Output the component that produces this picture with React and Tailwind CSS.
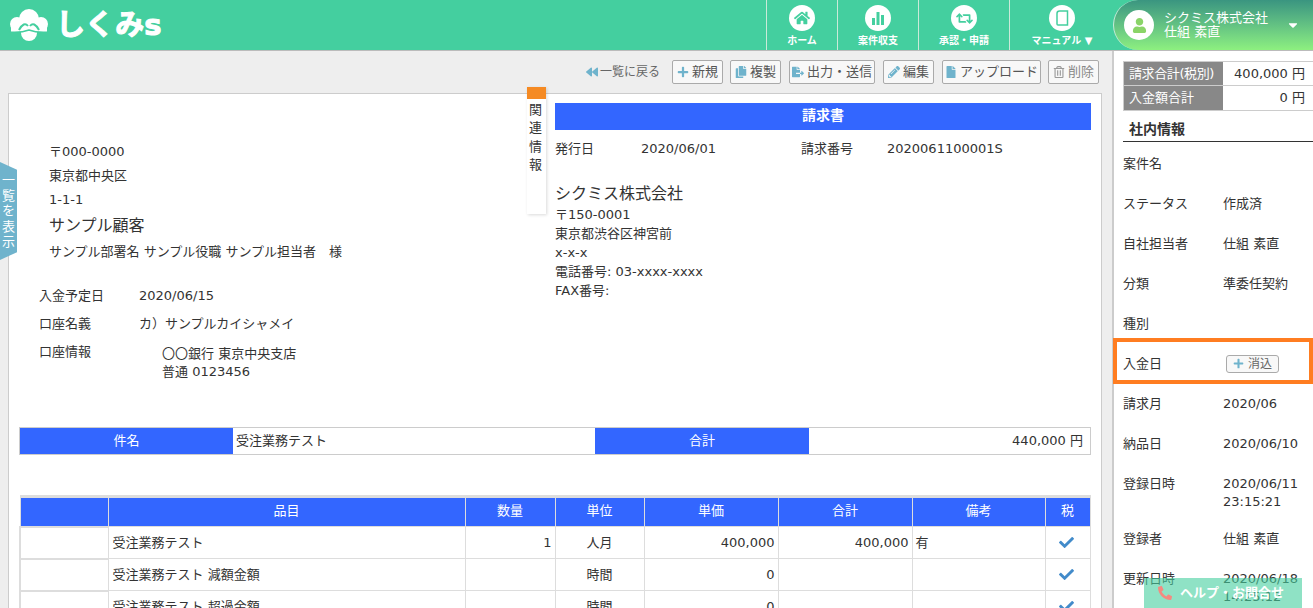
import React from 'react';
import { FaBackward, FaPlus, FaCopy, FaFileExport, FaPencilAlt, FaFile, FaRegTrashAlt, FaCheck, FaPhone, FaUser, FaHome, FaRetweet, FaCaretDown } from 'react-icons/fa';

const sideRows = [
    { label: '案件名', value: '' },
    { label: 'ステータス', value: '作成済' },
    { label: '自社担当者', value: '仕組 素直' },
    { label: '分類', value: '準委任契約' },
    { label: '種別', value: '' },
];

const sideRowsAfter = [
    { label: '請求月', value: '2020/06' },
    { label: '納品日', value: '2020/06/10' },
    { label: '登録日時', value: '2020/06/11 23:15:21', tall: true },
    { label: '登録者', value: '仕組 素直' },
    { label: '更新日時', value: '2020/06/18 14:25:12', tall: true },
];

const items = [
    { name: '受注業務テスト', qty: '1', unit: '人月', price: '400,000', total: '400,000', note: '有' },
    { name: '受注業務テスト 減額金額', qty: '', unit: '時間', price: '0', total: '', note: '' },
    { name: '受注業務テスト 超過金額', qty: '', unit: '時間', price: '0', total: '', note: '' },
];

function Logo() {
    return (
        <div className="flex items-center gap-[7px] ml-[9px]">
            <svg width="40" height="32" viewBox="0 0 40 32">
                <circle cx="20" cy="10" r="10" fill="#fff" />
                <circle cx="8" cy="15" r="7" fill="#fff" />
                <circle cx="32" cy="15" r="7" fill="#fff" />
                <rect x="2" y="14" width="36" height="9" fill="#fff" />
                <circle cx="20" cy="24" r="8" fill="#fff" />
                <path d="M10 21 Q15 12 19 17 M30 21 Q25 12 21 17" fill="none" stroke="#44cf9f" strokeWidth="2" />
                <path d="M0 23 Q12 24 20 21 Q28 24 40 23" fill="none" stroke="#44cf9f" strokeWidth="1.6" />
            </svg>
            <span className="text-[29px] leading-none font-bold text-white [-webkit-text-stroke:1px_#fff]">しくみs</span>
        </div>
    );
}

function NavItem({ width, label, children }) {
    return (
        <div className={`${width} h-full border-l border-[#c9ead9] flex flex-col items-center pt-[5px]`}>
            <div className="w-[26px] h-[26px] rounded-full bg-white flex items-center justify-center text-[#44cf9f]">
                {children}
            </div>
            <span className="text-[10px] leading-[12px] mt-[4px] font-bold text-white">{label}</span>
        </div>
    );
}

function ToolButton({ icon, label, muted, className }) {
    return (
        <button className={`h-[24px] flex items-center justify-center gap-[3px] bg-[#f8f8f8] border border-[#aaa] rounded-[2px] text-[13px] ${muted ? 'text-[#888]' : 'text-[#555]'} ${className}`}>
            {icon}
            {label}
        </button>
    );
}

function SideRow({ label, value, tall }) {
    return (
        <div className={`flex pl-[9px] text-[#333] ${tall ? 'h-[55px]' : 'h-[40px]'}`}>
            <span className="w-[100px] leading-[40px] shrink-0">{label}</span>
            <span className="w-[90px] pt-[11px] leading-[18px]">{value}</span>
        </div>
    );
}

export default function App() {
    return (
        <div className="relative h-[608px] overflow-hidden flex flex-col bg-[#eee] text-[13px] text-[#333] font-['DejaVu_Sans','Noto_Sans_CJK_JP',sans-serif]">
            {/* Header */}
            <header className="h-[51px] shrink-0 flex items-center justify-between bg-[#44cf9f] border-b border-[#bbb]">
                <Logo />
                <div className="flex items-center h-full">
                    <NavItem width="w-[71px]" label="ホーム"><FaHome size={16} /></NavItem>
                    <NavItem width="w-[81px]" label="案件収支">
                        <svg width="14" height="14" viewBox="0 0 14 14" fill="currentColor">
                            <rect x="1" y="7" width="3" height="7" />
                            <rect x="5.5" y="1" width="3" height="13" />
                            <rect x="10" y="4" width="3" height="10" />
                        </svg>
                    </NavItem>
                    <NavItem width="w-[91px]" label="承認・申請"><FaRetweet size={17} /></NavItem>
                    <NavItem width="w-[105px]" label="マニュアル ▼">
                        <svg width="14" height="16" viewBox="0 0 14 16" fill="none" stroke="currentColor" strokeWidth="1.5">
                            <path d="M2 14V3.5Q2 1 4.5 1H12.5V15H3Q2 15 2 14Z" />
                        </svg>
                    </NavItem>
                    <div className="w-[200px] h-full ml-[-1px] rounded-tl-[26px] rounded-bl-[26px] border-l border-[#c9ead9] bg-gradient-to-b from-[#3a9580] to-[#8df07f] flex items-center pl-[10px] text-white">
                        <div className="w-[30px] h-[30px] rounded-full bg-white flex items-center justify-center text-[#8ad468]">
                            <FaUser size={15} />
                        </div>
                        <div className="ml-[10px] text-[13px] leading-[14px]">
                            <div>シクミス株式会社</div>
                            <div>仕組 素直</div>
                        </div>
                        <FaCaretDown size={14} className="ml-auto mr-[13px]" />
                    </div>
                </div>
            </header>

            <div className="flex flex-1 min-h-0">
                {/* Main column */}
                <main className="w-[1112px] shrink-0">
                    <div className="h-[42px] flex items-center justify-end gap-[7px] pr-[13px]">
                        <span className="flex items-center gap-[2px] mr-[5px] text-[12px] text-[#666]">
                            <FaBackward size={12} className="text-[#6fb3cc]" />一覧に戻る
                        </span>
                        <ToolButton className="w-[51px]" icon={<FaPlus size={12} className="text-[#6fb3cc]" />} label="新規" />
                        <ToolButton className="w-[51px]" icon={<FaCopy size={12} className="text-[#6fb3cc]" />} label="複製" />
                        <ToolButton className="w-[86px] ml-[1px]" icon={<FaFileExport size={12} className="text-[#6fb3cc]" />} label="出力・送信" />
                        <ToolButton className="w-[51px] ml-[1px]" icon={<FaPencilAlt size={12} className="text-[#6fb3cc]" />} label="編集" />
                        <ToolButton className="w-[99px] ml-[1px]" icon={<FaFile size={12} className="text-[#6fb3cc]" />} label="アップロード" />
                        <ToolButton className="w-[51px]" icon={<FaRegTrashAlt size={12} className="text-[#999]" />} label="削除" muted />
                    </div>

                    <div className="relative ml-[8px] w-[1094px] h-[600px] bg-white border border-[#ccc] pl-[10px]">
                        <div className="h-[333px] flex">
                            {/* Customer and payment */}
                            <div className="w-[536px] shrink-0 pt-[46px]">
                                <div className="pl-[30px] leading-[24px]">
                                    <div>〒000-0000</div>
                                    <div>東京都中央区</div>
                                    <div>1-1-1</div>
                                    <div className="text-[16px] leading-[28px]">サンプル顧客</div>
                                    <div>サンプル部署名 サンプル役職 サンプル担当者　様</div>
                                </div>
                                <div className="mt-[18px] pl-[20px] leading-[28px]">
                                    <div className="flex"><span className="w-[100px]">入金予定日</span>2020/06/15</div>
                                    <div className="flex"><span className="w-[100px]">口座名義</span>カ）サンプルカイシャメイ</div>
                                    <div className="flex">
                                        <span className="w-[123px]">口座情報</span>
                                        <div className="pt-[7px] leading-[18px]">
                                            <div>〇〇銀行 東京中央支店</div>
                                            <div>普通 0123456</div>
                                        </div>
                                    </div>
                                </div>
                            </div>
                            {/* Issuer */}
                            <div className="w-[536px] pt-[9px]">
                                <div className="h-[27px] pb-[2px] bg-[#3366ff] text-white text-[14px] font-bold flex items-center justify-center">請求書</div>
                                <div className="flex mt-[10px] leading-[18px]">
                                    <span className="w-[86px]">発行日</span>
                                    <span className="w-[160px]">2020/06/01</span>
                                    <span className="w-[86px]">請求番号</span>
                                    <span>2020061100001S</span>
                                </div>
                                <div className="mt-[24px] text-[16px] leading-[24px]">シクミス株式会社</div>
                                <div className="leading-[19px] mt-[-1px]">
                                    <div>〒150-0001</div>
                                    <div>東京都渋谷区神宮前</div>
                                    <div>x-x-x</div>
                                    <div>電話番号: 03-xxxx-xxxx</div>
                                    <div>FAX番号:</div>
                                </div>
                            </div>
                        </div>

                        {/* Summary */}
                        <div className="w-[1072px] h-[28px] flex border border-[#ccc] leading-[26px]">
                            <div className="w-[213px] bg-[#3366ff] text-white text-center">件名</div>
                            <div className="w-[362px] pl-[3px]">受注業務テスト</div>
                            <div className="w-[214px] bg-[#3366ff] text-white text-center">合計</div>
                            <div className="flex-1 text-right pr-[7px]">440,000 円</div>
                        </div>

                        {/* Line items */}
                        <table className="mt-[40px] w-[1070px] table-fixed border-collapse border-t-[3px] border-t-[#ddd]">
                            <colgroup>
                                <col className="w-[88px]" />
                                <col className="w-[357px]" />
                                <col className="w-[90px]" />
                                <col className="w-[89px]" />
                                <col className="w-[134px]" />
                                <col className="w-[134px]" />
                                <col className="w-[133px]" />
                                <col className="w-[45px]" />
                            </colgroup>
                            <thead>
                                <tr className="h-[30px] bg-[#3366ff] text-white">
                                    {['', '品目', '数量', '単位', '単価', '合計', '備考', '税'].map((h, i) => (
                                        <th key={i} className="font-normal border border-[#ddd] p-0 pb-[2px]">{h}</th>
                                    ))}
                                </tr>
                            </thead>
                            <tbody>
                                {items.map((item) => (
                                    <tr key={item.name} className="h-[32px]">
                                        <td className="border-2 border-[#ddd] border-r-[1px]"></td>
                                        <td className="border border-[#ddd] pl-[4px]">{item.name}</td>
                                        <td className="border border-[#ddd] text-right pr-[3px]">{item.qty}</td>
                                        <td className="border border-[#ddd] text-center">{item.unit}</td>
                                        <td className="border border-[#ddd] text-right pr-[3px]">{item.price}</td>
                                        <td className="border border-[#ddd] text-right pr-[3px]">{item.total}</td>
                                        <td className="border border-[#ddd] pl-[3px]">{item.note}</td>
                                        <td className="border border-[#ddd] pr-[3px]"><FaCheck size={15} className="mx-auto text-[#428bca]" /></td>
                                    </tr>
                                ))}
                            </tbody>
                        </table>

                        {/* Related info tab */}
                        <div className="absolute left-[518px] top-[-7px] w-[19px] h-[127px] bg-white shadow-[1px_1px_3px_rgba(0,0,0,0.15)] flex flex-col items-center">
                            <div className="w-[19px] h-[12px] shrink-0 bg-[#f58a23]"></div>
                            <div className="mt-[2px] pr-[2px] leading-[18.3px] flex flex-col items-center text-[13px]">
                                <span>関</span><span>連</span><span>情</span><span>報</span>
                            </div>
                        </div>
                    </div>
                </main>

                {/* Sidebar */}
                <aside className="flex-1 bg-white border-l-2 border-[#ccc] pt-[10px]">
                    <div className="ml-[9px] border border-[#ccc] border-r-0">
                        <div className="flex h-[24px] border-b border-[#ccc] leading-[23px]">
                            <div className="w-[99px] bg-[#888] text-white pl-[5px] tracking-[-0.4px] whitespace-nowrap">請求合計(税別)</div>
                            <div className="flex-1 text-right pr-[8px]">400,000 円</div>
                        </div>
                        <div className="flex h-[24px] leading-[23px]">
                            <div className="w-[99px] bg-[#888] text-white pl-[5px]">入金額合計</div>
                            <div className="flex-1 text-right pr-[8px]">0 円</div>
                        </div>
                    </div>
                    <div className="ml-[9px] mt-[9px] h-[22px] pl-[6px] border-b border-[#333] font-bold text-[14px] leading-[19px]">社内情報</div>
                    <div className="pt-[2px]">
                        {sideRows.map((row) => <SideRow key={row.label} {...row} />)}
                    </div>
                    <div className="h-[46px] mt-[-6px] ml-[-1px] border-[4px] border-[#ff7d21] flex items-center pl-[6px] pt-[5px]">
                        <span className="w-[103px]">入金日</span>
                        <button className="h-[18px] w-[53px] flex items-center justify-center gap-[4px] bg-[#f8f8f8] border border-[#aaa] rounded-[3px] text-[12px] text-[#666]">
                            <FaPlus size={11} className="text-[#6fb3cc]" />消込
                        </button>
                    </div>
                    <div>
                        {sideRowsAfter.map((row) => <SideRow key={row.label} {...row} />)}
                    </div>
                </aside>
            </div>

            {/* List tab */}
            <div className="absolute left-0 top-[162px] w-[17px] h-[98px] bg-[#6fb3cc] text-white text-[13px] leading-[15.5px] flex flex-col items-center justify-center [clip-path:polygon(0_0,100%_8%,100%_92%,0_100%)]">
                <span>一</span><span>覧</span><span>を</span><span>表</span><span>示</span>
            </div>

            {/* Help button */}
            <div className="absolute left-[1144px] top-[578px] w-[158px] h-[30px] pl-[14px] bg-[#44cf9f]/60 flex items-center gap-[8px] text-white font-bold text-[13px]">
                <FaPhone size={14} className="text-[#f58a80] -scale-x-100" />ヘルプ・お問合せ
            </div>
        </div>
    );
}
